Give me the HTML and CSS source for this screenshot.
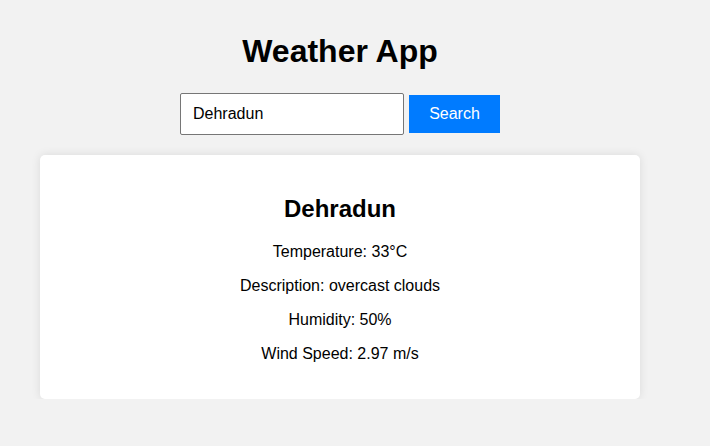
FILE: index.html
```html
<!DOCTYPE html>
<html lang="en">
<head>
<meta charset="UTF-8">
<title>Weather App</title>
<link rel="stylesheet" href="styles.css">
</head>
<body>
<div class="app">
  <h1 class="title">Weather App</h1>
  <form class="search" onsubmit="return false;">
    <input class="search-input" type="text" value="Dehradun">
    <button class="search-btn" type="submit">Search</button>
  </form>
  <div class="card">
    <h2 class="city">Dehradun</h2>
    <p class="info">Temperature: 33°C</p>
    <p class="info">Description: overcast clouds</p>
    <p class="info">Humidity: 50%</p>
    <p class="info">Wind Speed: 2.97 m/s</p>
  </div>
</div>
</body>
</html>
```

FILE: styles.css
```css
html, body {
  margin: 0;
  padding: 0;
  background: #f2f2f2;
}
body {
  font-family: "Liberation Sans", Arial, sans-serif;
  color: #000;
}
.app {
  width: 680px;
  text-align: center;
  padding-top: 33px;
}
.title {
  font-size: 32px;
  font-weight: bold;
  margin: 0 0 23px;
}
.search {
  display: flex;
  justify-content: center;
  align-items: center;
  gap: 5px;
  margin: 0;
}
.search-input {
  box-sizing: border-box;
  width: 224px;
  height: 42px;
  padding: 10px 12px;
  font-family: inherit;
  font-size: 16px;
  border: 1px solid #767676;
  border-radius: 2px;
  background: #fff;
  color: #000;
  outline: none;
}
.search-btn {
  box-sizing: border-box;
  width: 91px;
  height: 38px;
  padding: 0;
  font-family: inherit;
  font-size: 16px;
  border: none;
  background: #007bff;
  color: #fff;
  cursor: pointer;
}
.card {
  width: 600px;
  box-sizing: border-box;
  margin: 20px auto 0;
  padding: 20px;
  background: #fff;
  border-radius: 5px;
  box-shadow: 0 0 10px rgba(0, 0, 0, 0.1);
}
.city {
  font-size: 24px;
  font-weight: bold;
  margin: 20px 0;
}
.info {
  font-size: 16px;
  margin: 16px 0;
}
```
